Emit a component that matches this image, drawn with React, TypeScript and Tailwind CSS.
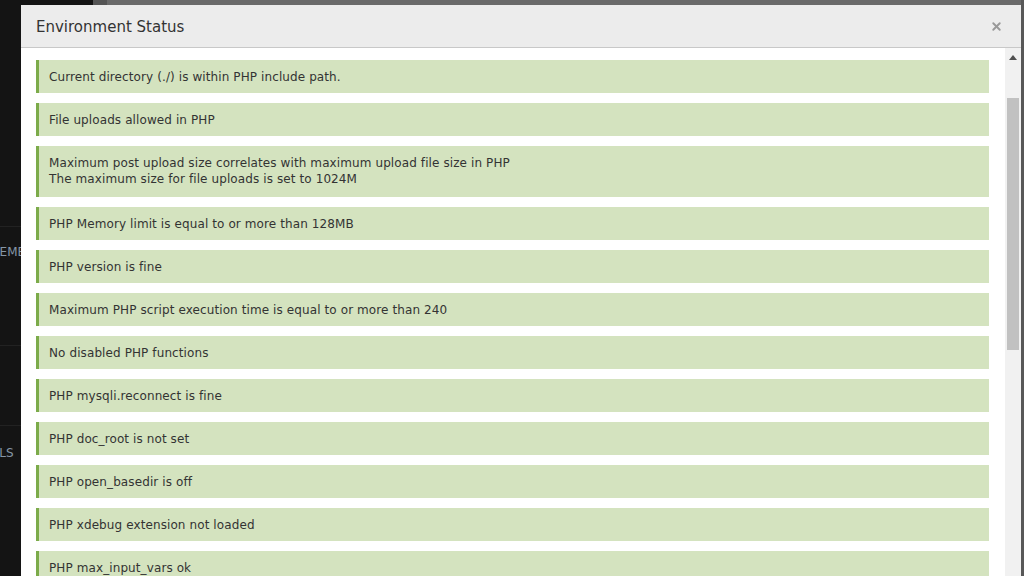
import { X } from "lucide-react";

const checks: string[][] = [
  ["Current directory (./) is within PHP include path."],
  ["File uploads allowed in PHP"],
  [
    "Maximum post upload size correlates with maximum upload file size in PHP",
    "The maximum size for file uploads is set to 1024M",
  ],
  ["PHP Memory limit is equal to or more than 128MB"],
  ["PHP version is fine"],
  ["Maximum PHP script execution time is equal to or more than 240"],
  ["No disabled PHP functions"],
  ["PHP mysqli.reconnect is fine"],
  ["PHP doc_root is not set"],
  ["PHP open_basedir is off"],
  ["PHP xdebug extension not loaded"],
  ["PHP max_input_vars ok"],
];

export default function App() {
  return (
    <div className="relative h-[576px] w-[1024px] overflow-hidden bg-[#6a6a6a] font-['DejaVu_Sans',Verdana,sans-serif]">
      {/* dimmed page behind the dialog */}
      <div className="flex h-full">
        <div className="flex w-[93px] flex-col bg-[#141414] text-[12px] text-[#8596a6]">
          <div className="h-[227px] border-b border-[#222]" />
          <div className="flex h-[119px] items-start border-b border-[#222] pt-[16px]">
            <span className="-ml-[8px]">SEMENT</span>
          </div>
          <div className="h-[80px] border-b border-[#222]" />
          <div className="pt-[18px]">
            <span className="-ml-[27px]">TOOLS</span>
          </div>
        </div>
        <div className="w-[14px] bg-[#555]" />
        <div className="flex-1 bg-[#6a6a6a]" />
      </div>

      <div className="absolute left-[21px] top-[5px] flex h-[600px] w-[1000px] flex-col bg-white">
        <div className="flex h-[43px] shrink-0 items-center justify-between border-b border-[#c8c8c8] bg-[#ececec] pl-[15px] pr-[18px]">
          <h3 className="pt-[2px] text-[15px] text-[#333]">Environment Status</h3>
          <X className="h-[13px] w-[13px] text-[#999]" strokeWidth={3.5} />
        </div>
        <div className="flex min-h-0 flex-1">
          <div className="flex flex-1 flex-col gap-[10px] overflow-hidden pl-[15px] pr-[16px] pt-[12px]">
            {checks.map((lines, i) => (
              <div
                key={i}
                className={
                  lines.length > 1
                    ? "shrink-0 border-l-[3px] border-[#7cab4a] bg-[#d4e3bf] pb-[10px] pl-[10px] pt-[9px] text-[12px] leading-[16px] tracking-[0.1px] text-[#333]"
                    : "shrink-0 border-l-[3px] border-[#7cab4a] bg-[#d4e3bf] pb-[7px] pl-[10px] pt-[9px] text-[12px] leading-[17px] tracking-[0.1px] text-[#333]"
                }
              >
                {lines.map((line, j) => (
                  <div key={j}>{line}</div>
                ))}
              </div>
            ))}
          </div>
          <div className="flex w-[16px] shrink-0 flex-col items-center bg-[#f1f1f1]">
            <svg width="8" height="5" viewBox="0 0 8 5" className="mt-[7px]">
              <path d="M4 0 L8 5 L0 5 Z" fill="#505050" />
            </svg>
            <div className="mt-[38px] h-[252px] w-[12px] bg-[#c1c1c1]" />
          </div>
        </div>
      </div>
      <div className="absolute right-0 top-0 h-full w-[3px] bg-[#585858]" />
    </div>
  );
}
